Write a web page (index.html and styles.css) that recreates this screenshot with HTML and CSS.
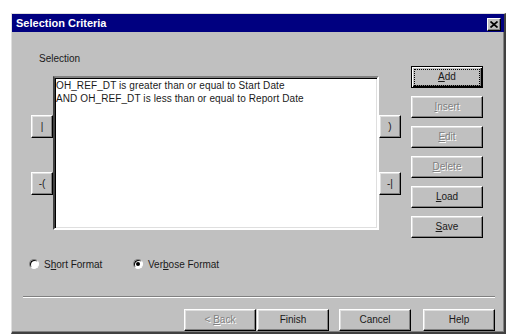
FILE: index.html
```html
<!DOCTYPE html>
<html>
<head>
<meta charset="utf-8">
<link rel="stylesheet" href="styles.css">
</head>
<body>
<div class="dialog">
  <div class="titlebar">
    <span class="title">Selection Criteria</span>
    <span class="close"><svg width="8" height="7" viewBox="0 0 8 7"><path d="M0.5 0.5 L7.5 6.5 M7.5 0.5 L0.5 6.5" stroke="#000" stroke-width="1.7" fill="none"/></svg></span>
  </div>
  <div class="main">
    <div class="leftcol">
      <div class="label">Selection</div>
      <div class="listrow">
        <div class="side">
          <div class="btn small">|</div>
          <div class="btn small">-(</div>
        </div>
        <div class="listbox">
          <div>OH_REF_DT is greater than or equal to Start Date</div>
          <div>AND OH_REF_DT is less than or equal to Report Date</div>
        </div>
        <div class="side">
          <div class="btn small">)</div>
          <div class="btn small">-|</div>
        </div>
      </div>
    </div>
    <div class="rightcol">
      <div class="btn big default"><span class="focus"><span><u>A</u>dd</span></span></div>
      <div class="btn big disabled"><span><u>I</u>nsert</span></div>
      <div class="btn big disabled"><span><u>E</u>dit</span></div>
      <div class="btn big disabled"><span><u>D</u>elete</span></div>
      <div class="btn big"><span><u>L</u>oad</span></div>
      <div class="btn big"><span><u>S</u>ave</span></div>
    </div>
  </div>
  <div class="radios">
    <div class="radio r1"><span class="dot"></span><span>S<u>h</u>ort Format</span></div>
    <div class="radio"><span class="dot checked"></span><span>Ver<u>b</u>ose Format</span></div>
  </div>
  <div class="sep"></div>
  <div class="footer">
    <div class="btn big disabled"><span>&lt; <u>B</u>ack</span></div>
    <div class="btn big finish"><span>Finish</span></div>
    <div class="btn big cancel"><span>Cancel</span></div>
    <div class="btn big help"><span>Help</span></div>
  </div>
</div>
</body>
</html>
```
FILE: styles.css
```css
* { box-sizing: border-box; }
html, body { margin: 0; padding: 0; background: #fff; }
body {
  padding: 13px 0 0 11px;
  font-family: "Liberation Sans", Arial, sans-serif;
  font-size: 10px;
  color: #1a1a1a;
}
.dialog {
  width: 495px;
  height: 321px;
  background: #c0c0c0;
  border-style: solid;
  border-width: 1px 2px 2px 1px;
  border-color: #dfdfdf #404040 #404040 #dfdfdf;
  box-shadow: inset -1px -1px #808080;
  display: flex;
  flex-direction: column;
}
.titlebar {
  height: 18px;
  background: #000080;
  display: flex;
  align-items: center;
  justify-content: space-between;
  padding: 0 3px 0 4px;
}
.title {
  color: #fff;
  font-weight: bold;
  font-size: 11px;
}
.close {
  width: 14px;
  height: 13px;
  margin-top: 2px;
  background: #c0c0c0;
  border: 1px solid;
  border-color: #fff #000 #000 #fff;
  box-shadow: inset -1px -1px #808080;
  display: flex;
  align-items: center;
  justify-content: center;
}
.close svg { display: block; }
.main {
  display: flex;
  padding: 21px 0 0 19px;
}
.leftcol { width: 370px; }
.label {
  line-height: 12px;
  margin-left: 8px;
}
.listrow {
  display: flex;
  margin-top: 11px;
  height: 154px;
}
.side {
  width: 22px;
  display: flex;
  flex-direction: column;
  padding-top: 39px;
  gap: 34px;
}
.listbox {
  width: 326px;
  height: 154px;
  background: #fff;
  border: 2px solid;
  border-color: #808080 #fff #fff #404040;
  box-shadow: inset 1px 1px #000, inset -1px -1px #dfdfdf;
  padding: 1px 0 0 1px;
  line-height: 13px;
  font-size: 10px;
  letter-spacing: 0.1px;
  white-space: nowrap;
}
.btn {
  background: #c0c0c0;
  border: 1px solid;
  border-color: #fff #000 #000 #fff;
  box-shadow: inset -1px -1px #808080, inset 1px 1px #dfdfdf;
  display: flex;
  align-items: center;
  justify-content: center;
  line-height: 12px;
  white-space: pre;
}
.small { width: 22px; height: 23px; }
.big { width: 72px; height: 22px; }
.disabled {
  color: #808080;
  text-shadow: 1px 1px 0 #fff;
}
.default {
  border: 1px solid #000;
  box-shadow: inset 1px 1px #fff, inset -1px -1px #000, inset -2px -2px #808080;
}
.focus {
  display: flex;
  align-items: center;
  justify-content: center;
  width: 64px;
  height: 15px;
  outline: 1px dotted #000;
}
.rightcol {
  display: flex;
  flex-direction: column;
  gap: 8px;
  margin-left: 10px;
  padding-top: 13px;
}
.radios {
  display: flex;
  margin-top: 19px;
  padding-left: 17px;
  height: 14px;
  align-items: center;
}
.radio {
  display: flex;
  align-items: center;
  gap: 5px;
}
.r1 { width: 104px; }
.dot {
  width: 10px;
  height: 10px;
  border-radius: 50%;
  background: #fff;
  border: 1px solid;
  border-color: #808080 #fff #fff #808080;
  box-shadow: inset 1px 1px #000;
  position: relative;
}
.dot.checked::after {
  content: "";
  position: absolute;
  left: 2px;
  top: 2px;
  width: 4px;
  height: 4px;
  border-radius: 50%;
  background: #000;
}
.sep {
  margin: 25px 9px 0 11px;
  height: 2px;
  border-top: 1px solid #808080;
  border-bottom: 1px solid #fff;
}
.footer {
  display: flex;
  justify-content: flex-end;
  margin-top: 11px;
  padding-right: 9px;
}
.finish { margin-left: 1px; }
.cancel { margin-left: 10px; }
.help { margin-left: 12px; }
```
